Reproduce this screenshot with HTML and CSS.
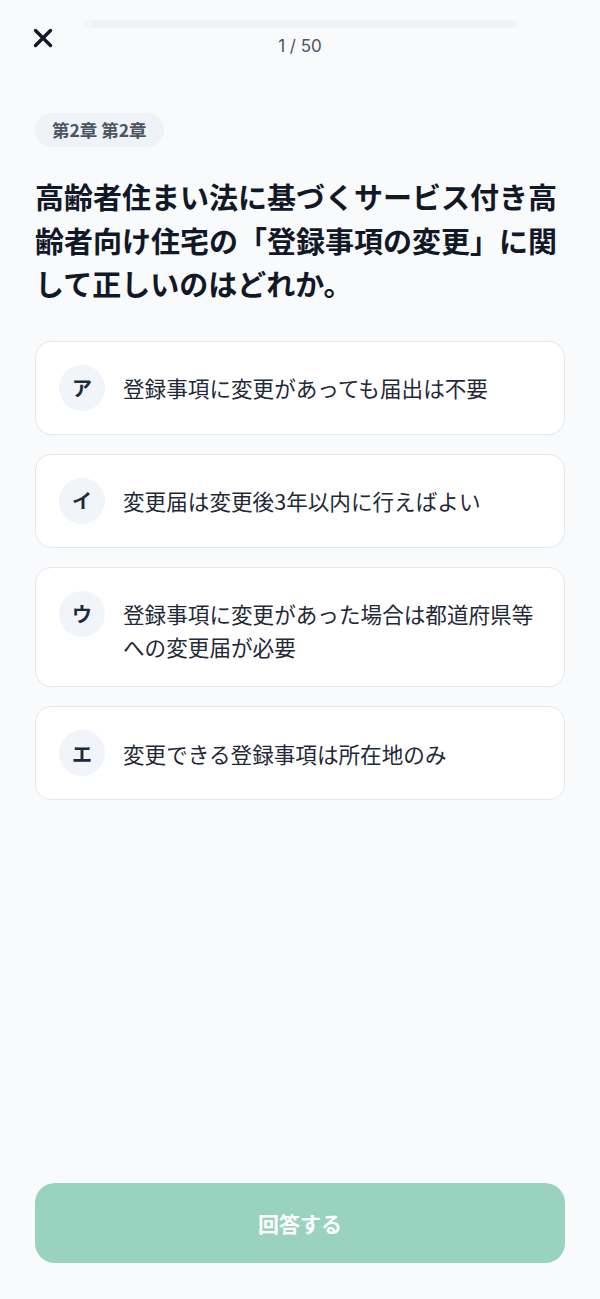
FILE: index.html
```html
<!DOCTYPE html>
<html lang="ja">
<head>
<meta charset="utf-8">
<title>Quiz</title>
<link rel="stylesheet" href="styles.css">
</head>
<body>
<div class="app">
  <header class="header">
    <button class="close" aria-label="閉じる">
      <svg width="20" height="20" viewBox="0 0 20 20"><path d="M2.5 2.5 L17.5 17.5 M17.5 2.5 L2.5 17.5" stroke="#111827" stroke-width="3.4" stroke-linecap="round" fill="none"/></svg>
    </button>
    <div class="progress-col">
      <div class="progress"><div class="progress-fill" style="width:2%"></div></div>
      <div class="counter">1 / 50</div>
    </div>
  </header>

  <main class="content">
    <span class="chip">第2章 第2章</span>
    <h1 class="question">高齢者住まい法に基づくサービス付き高齢者向け住宅の「登録事項の変更」に関して正しいのはどれか。</h1>

    <div class="options">
      <div class="option">
        <span class="badge">ア</span>
        <span class="option-text">登録事項に変更があっても届出は不要</span>
      </div>
      <div class="option">
        <span class="badge">イ</span>
        <span class="option-text">変更届は変更後3年以内に行えばよい</span>
      </div>
      <div class="option">
        <span class="badge">ウ</span>
        <span class="option-text">登録事項に変更があった場合は都道府県等への変更届が必要</span>
      </div>
      <div class="option">
        <span class="badge">エ</span>
        <span class="option-text">変更できる登録事項は所在地のみ</span>
      </div>
    </div>
  </main>

  <footer class="footer">
    <button class="submit">回答する</button>
  </footer>
</div>
</body>
</html>
```

FILE: styles.css
```css
* { box-sizing: border-box; }

html, body {
  margin: 0;
  padding: 0;
  background: #f9fafb;
}

body {
  font-family: "Inter", "Noto Sans CJK JP", sans-serif;
  color: #111827;
}

.app {
  display: flex;
  flex-direction: column;
  min-height: 100vh;
}

.header {
  display: grid;
  grid-template-columns: 83px 434px 1fr;
  align-items: center;
  padding-top: 20px;
}

.close {
  justify-self: start;
  margin-left: 33px;
  width: 20px;
  height: 20px;
  padding: 0;
  border: 0;
  background: none;
  display: flex;
}

.progress-col {
  display: flex;
  flex-direction: column;
  align-items: center;
}

.progress {
  width: 100%;
  height: 8px;
  border-radius: 4px;
  background: #f1f3f6;
  overflow: hidden;
}

.progress-fill {
  height: 100%;
  background: #f4f6f8;
}

.counter {
  margin-top: 9px;
  font-size: 17px;
  line-height: 18px;
  color: #4b5563;
}

.content {
  display: flex;
  flex-direction: column;
  padding: 0 35px;
}

.chip {
  align-self: flex-start;
  margin-top: 58px;
  height: 34px;
  line-height: 34px;
  padding: 0 17px;
  border-radius: 17px;
  background: #eff2f6;
  color: #4b5563;
  font-family: "Noto Sans CJK JP", "Inter", sans-serif;
  font-weight: 700;
  font-size: 17.5px;
}

.question {
  margin: 28px 0 0;
  font-family: "Noto Sans CJK JP", sans-serif;
  font-size: 29px;
  line-height: 43.5px;
  font-weight: 700;
  color: #111827;
}

.options {
  margin-top: 35px;
  display: flex;
  flex-direction: column;
  gap: 19px;
}

.option {
  display: flex;
  align-items: flex-start;
  gap: 18px;
  padding: 23px;
  background: #ffffff;
  border: 1px solid #e5e7eb;
  border-radius: 16px;
}

.badge {
  flex-shrink: 0;
  width: 46px;
  height: 46px;
  border-radius: 50%;
  background: #f1f4f8;
  display: flex;
  align-items: center;
  justify-content: center;
  font-family: "Noto Sans CJK JP", sans-serif;
  font-weight: 700;
  font-size: 20px;
  color: #1e293b;
}

.option-text {
  padding-top: 6.5px;
  font-family: "Noto Sans CJK JP", sans-serif;
  font-size: 21.6px;
  line-height: 33px;
  color: #1f2937;
}

.footer {
  margin-top: auto;
  padding: 0 35px 36px;
}

.submit {
  display: block;
  width: 100%;
  height: 80px;
  border: 0;
  border-radius: 20px;
  background: #99d3bf;
  color: #ffffff;
  font-family: "Noto Sans CJK JP", sans-serif;
  font-weight: 700;
  font-size: 21px;
}
```
